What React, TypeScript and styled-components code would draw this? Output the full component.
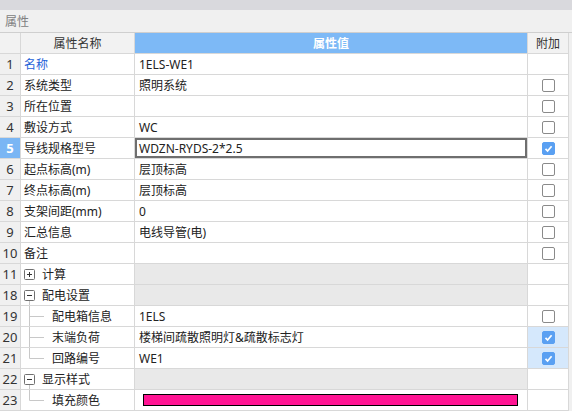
import React from "react";
import styled, { createGlobalStyle } from "styled-components";

type Row = {
	n: number;
	name: string;
	value?: string;
	kind?: "normal" | "group" | "child";
	open?: boolean;
	last?: boolean;
	check?: boolean;
	selected?: boolean;
	link?: boolean;
	color?: string;
};

const rows: Row[] = [
	{ n: 1, name: "名称", value: "1ELS-WE1", link: true },
	{ n: 2, name: "系统类型", value: "照明系统", check: false },
	{ n: 3, name: "所在位置", value: "", check: false },
	{ n: 4, name: "敷设方式", value: "WC", check: false },
	{ n: 5, name: "导线规格型号", value: "WDZN-RYDS-2*2.5", check: true, selected: true },
	{ n: 6, name: "起点标高(m)", value: "层顶标高", check: false },
	{ n: 7, name: "终点标高(m)", value: "层顶标高", check: false },
	{ n: 8, name: "支架间距(mm)", value: "0", check: false },
	{ n: 9, name: "汇总信息", value: "电线导管(电)", check: false },
	{ n: 10, name: "备注", value: "", check: false },
	{ n: 11, name: "计算", kind: "group", open: false },
	{ n: 18, name: "配电设置", kind: "group", open: true },
	{ n: 19, name: "配电箱信息", value: "1ELS", kind: "child", check: false },
	{ n: 20, name: "末端负荷", value: "楼梯间疏散照明灯&疏散标志灯", kind: "child", check: true },
	{ n: 21, name: "回路编号", value: "WE1", kind: "child", last: true, check: true },
	{ n: 22, name: "显示样式", kind: "group", open: true },
	{ n: 23, name: "填充颜色", kind: "child", last: true, color: "#ff1493" },
];

function Guide({ last }: { last?: boolean }) {
	return (
		<svg width="28" height="21" style={{ flex: "none" }}>
			<line x1="6.5" y1="0" x2="6.5" y2={last ? 10.5 : 21} stroke="#c8c8c8" />
			<line x1="6.5" y1="10.5" x2="21" y2="10.5" stroke="#c8c8c8" />
		</svg>
	);
}

function Expander({ open }: { open?: boolean }) {
	return (
		<ExpWrap>
			<svg width="11" height="11">
				<rect x="0.5" y="0.5" width="10" height="10" rx="1" fill="#fff" stroke="#707070" />
				<line x1="3" y1="5.5" x2="8" y2="5.5" stroke="#333" />
				{!open && <line x1="5.5" y1="3" x2="5.5" y2="8" stroke="#333" />}
			</svg>
			{open && <Stem />}
		</ExpWrap>
	);
}

function Check({ on }: { on: boolean }) {
	return (
		<Box $on={on}>
			{on && (
				<svg width="13" height="13">
					<polyline points="3.5,6.8 5.6,9 9.6,4.3" fill="none" stroke="#fff" strokeWidth="1.7" />
				</svg>
			)}
		</Box>
	);
}

export default function App() {
	return (
		<>
			<Global />
			<Page>
				<TopBand />
				<Title>属性</Title>
				<Grid>
					<HeadCell />
					<HeadCell>属性名称</HeadCell>
					<HeadCell $blue>属性值</HeadCell>
					<HeadCell>附加</HeadCell>
					{rows.map((r) => {
						const group = r.kind === "group";
						const hl = r.n === 20 || r.n === 21;
						return (
							<React.Fragment key={r.n}>
								<NumCell $selected={r.selected}>{r.n}</NumCell>
								<NameCell $link={r.link}>
									{group && <Expander open={r.open} />}
									{r.kind === "child" && <Guide last={r.last} />}
									<span>{r.name}</span>
								</NameCell>
								<ValueCell $group={group} $selected={r.selected}>
									{r.color ? <Swatch style={{ background: r.color }} /> : r.value}
								</ValueCell>
								<AddCell $hl={hl}>{r.check !== undefined && <Check on={r.check} />}</AddCell>
							</React.Fragment>
						);
					})}
				</Grid>
			</Page>
		</>
	);
}

const Global = createGlobalStyle`
	body {
		margin: 0;
		background: #f0f0f0;
		font-family: "Noto Sans", "Noto Sans CJK SC", sans-serif;
		font-size: 12px;
		color: #222;
	}
`;

const Page = styled.div`
	width: 572px;
	height: 411px;
	overflow: hidden;
	background: #f0f0f0;
`;

const TopBand = styled.div`
	height: 10px;
	background: #d9d9dd;
`;

const Title = styled.div`
	height: 22px;
	line-height: 23px;
	padding-left: 5px;
	color: #808080;
	font-size: 12px;
	border-bottom: 1px solid #cfcfcf;
`;

const Grid = styled.div`
	display: grid;
	grid-template-columns: 21px 114px 393px 41px;
	grid-auto-rows: 21px;
	width: 569px;
	background: #fff;
`;

const Cell = styled.div`
	border-right: 1px solid #d8d8d8;
	border-bottom: 1px solid #d8d8d8;
	display: flex;
	align-items: center;
	white-space: nowrap;
	overflow: hidden;
	position: relative;
`;

const HeadCell = styled(Cell)<{ $blue?: boolean }>`
	justify-content: center;
	background: ${(p) => (p.$blue ? "#7db9f6" : "#f2f2f2")};
	color: ${(p) => (p.$blue ? "#fff" : "#333")};
	font-weight: ${(p) => (p.$blue ? 600 : 400)};
`;

const NumCell = styled(Cell)<{ $selected?: boolean }>`
	justify-content: center;
	background: ${(p) => (p.$selected ? "#7ab6f4" : "#f0f0f0")};
	color: ${(p) => (p.$selected ? "#fff" : "#333")};
	font-weight: ${(p) => (p.$selected ? 700 : 400)};
	font-size: 13px;
`;

const NameCell = styled(Cell)<{ $link?: boolean }>`
	padding-left: 2px;
	color: ${(p) => (p.$link ? "#1f62d8" : "#222")};
	& > span {
		margin-left: 1px;
	}
`;

const ValueCell = styled(Cell)<{ $group?: boolean; $selected?: boolean }>`
	padding-left: 4px;
	background: ${(p) => (p.$group ? "#e9e9e9" : "#fff")};
	box-shadow: ${(p) => (p.$selected ? "inset 0 0 0 2px #6f6f6f" : "none")};
`;

const AddCell = styled(Cell)<{ $hl?: boolean }>`
	justify-content: center;
	background: ${(p) => (p.$hl ? "#d5e8fc" : "#fff")};
`;

const Box = styled.div<{ $on: boolean }>`
	width: 13px;
	height: 13px;
	box-sizing: border-box;
	border-radius: 2px;
	border: 1px solid ${(p) => (p.$on ? "#5aa0f2" : "#8a8a8a")};
	background: ${(p) => (p.$on ? "#5aa0f2" : "#fff")};
	display: flex;
	svg {
		margin: -1px;
	}
`;

const ExpWrap = styled.div`
	position: relative;
	width: 11px;
	height: 11px;
	margin: 0 6px 0 1px;
	display: flex;
`;

const Stem = styled.div`
	position: absolute;
	left: 5px;
	top: 11px;
	width: 1px;
	height: 10px;
	background: #c8c8c8;
`;

const Swatch = styled.div`
	margin-left: 4px;
	width: 373px;
	height: 10px;
	border: 1px solid #000;
`;
